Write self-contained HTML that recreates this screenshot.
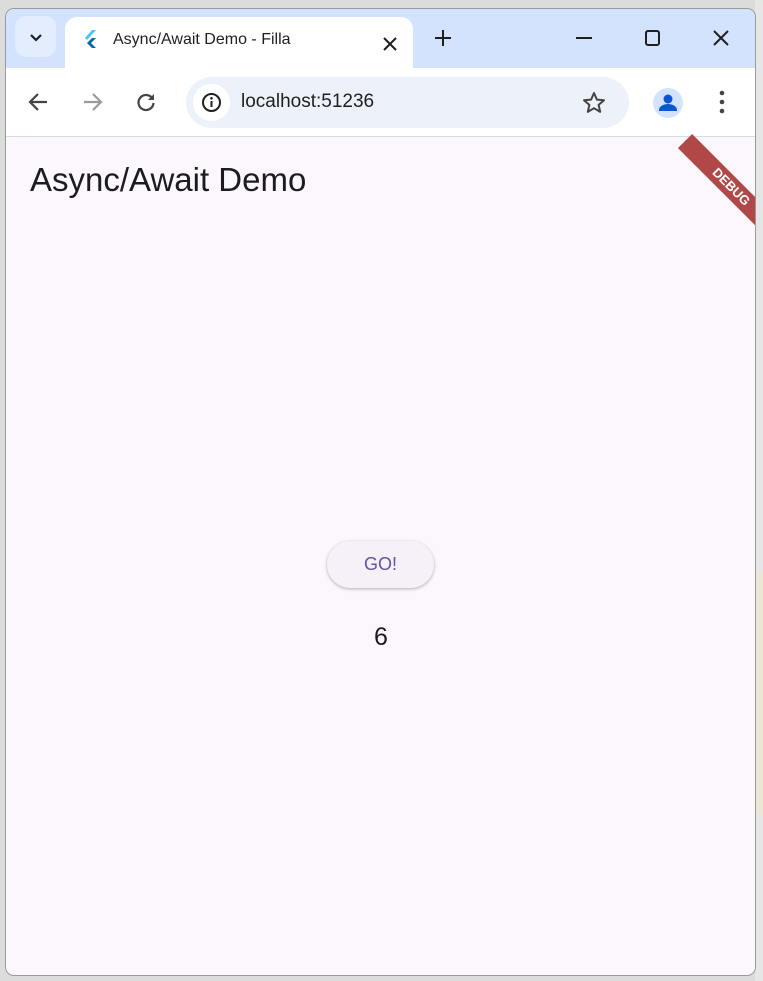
<!DOCTYPE html>
<html><head><meta charset="utf-8"><style>
*{margin:0;padding:0;box-sizing:border-box}
body{width:763px;height:981px;overflow:hidden;background:#dcdcdc;font-family:"Liberation Sans",sans-serif;position:relative}
.right{position:absolute;left:755px;top:0;width:8px;height:981px;background:#e6e6e6}
.beige{position:absolute;left:755px;top:572px;width:8px;height:243px;background:#ece6d6}
.win{position:absolute;left:5px;top:8px;width:751px;height:968px;border-radius:9px;overflow:hidden;background:#fcf7fd;border:1px solid #9a9a9a}
.tabs{position:absolute;left:0;top:0;width:100%;height:59px;background:#d3e3fd}
.tabbtn{position:absolute;left:9px;top:7px;width:41px;height:41px;border-radius:11px;background:#e4edfd}
.tab{position:absolute;left:59px;top:8px;width:348px;height:52px;background:#fff;border-radius:12px 12px 0 0}
.tab .t{position:absolute;left:48px;top:14px;font-size:16px;color:#1f1f1f}
.toolbar{position:absolute;left:0;top:59px;width:100%;height:69px;background:#fff;border-bottom:1px solid #dadce0}
.omni{position:absolute;left:180px;top:9px;width:443px;height:51px;border-radius:26px;background:#edf2fa}
.omni .ic{position:absolute;left:7px;top:7px;width:37px;height:37px;border-radius:50%;background:#fff}
.omni .u{position:absolute;left:55px;top:14px;font-size:19px;color:#1f1f1f}
.title{position:absolute;left:24px;top:152px;font-size:33px;color:#1d1b20}
.btn{position:absolute;left:321px;top:532px;width:107px;height:47px;border-radius:24px;background:#f6f0f8;box-shadow:0 1px 3px rgba(0,0,0,.3);color:#6750a4;font-size:18px;text-align:center;line-height:47px}
.num{position:absolute;left:0;width:750px;top:614px;text-align:center;font-size:25px;color:#1d1b20}
.ribbon{position:absolute;left:660px;top:168px;width:130px;height:20px;background:#b04848;transform:rotate(45deg);color:#fff;font-size:13px;font-weight:bold;text-align:center;line-height:20px}
svg{position:absolute}
</style></head><body>
<div class="right"></div><div class="beige"></div>
<div class="win">
 <div class="tabs">
  <div class="tabbtn"></div>
  <svg style="left:22px;top:20px" width="16" height="16" viewBox="0 0 16 16"><path d="M3 6l5 5 5-5" fill="none" stroke="#1f1f1f" stroke-width="2.2"/></svg>
  <div class="tab">
   <svg style="left:18px;top:12px" width="16" height="20" viewBox="0 0 16 20"><path d="M9 1L2 9l2 2 9-10z" fill="#47c5fb"/><path d="M9 9l-5 5 5 5h4l-5-5 5-5z" fill="#0569a8"/></svg>
   <div class="t">Async/Await Demo - Filla</div>
   <svg style="left:318px;top:20px" width="14" height="14" viewBox="0 0 14 14"><path d="M1 1l12 12M13 1L1 13" stroke="#1f1f1f" stroke-width="2"/></svg>
  </div>
  <svg style="left:428px;top:20px" width="18" height="18" viewBox="0 0 18 18"><path d="M9 1v16M1 9h16" stroke="#1f1f1f" stroke-width="2"/></svg>
  <svg style="left:570px;top:28px" width="16" height="3"><rect width="16" height="2" fill="#1f1f1f"/></svg>
  <svg style="left:639px;top:21px" width="15" height="16"><rect x="1" y="1" width="13" height="14" rx="2" fill="none" stroke="#1f1f1f" stroke-width="2"/></svg>
  <svg style="left:707px;top:21px" width="16" height="16"><path d="M1 1l14 14M15 1L1 15" stroke="#1f1f1f" stroke-width="2"/></svg>
 </div>
 <div class="toolbar">
  <svg style="left:22px;top:25px" width="20" height="18" viewBox="0 0 20 18"><path d="M19 9H3M10 1L2 9l8 8" fill="none" stroke="#444" stroke-width="2.2"/></svg>
  <svg style="left:77px;top:25px" width="20" height="18" viewBox="0 0 20 18"><path d="M1 9h16M10 1l8 8-8 8" fill="none" stroke="#9a9a9a" stroke-width="2.2"/></svg>
  <svg style="left:130px;top:24px" width="20" height="20" viewBox="0 0 20 20"><path d="M16 6A7.5 7.5 0 1 0 17.5 11" fill="none" stroke="#444" stroke-width="2.2"/><path d="M18 2v6h-6z" fill="#444"/></svg>
  <div class="omni"><div class="ic"></div>
   <svg style="left:15px;top:15px" width="21" height="21" viewBox="0 0 21 21"><circle cx="10.5" cy="10.5" r="8.5" fill="none" stroke="#1f1f1f" stroke-width="2"/><path d="M10.5 9v6" stroke="#1f1f1f" stroke-width="2"/><circle cx="10.5" cy="6.3" r="1.3" fill="#1f1f1f"/></svg>
   <div class="u">localhost:51236</div>
   <svg style="left:396px;top:14px" width="24" height="23" viewBox="0 0 24 23"><path d="M12 2l2.9 6.6 7.1.6-5.4 4.7 1.6 7-6.2-3.7-6.2 3.7 1.6-7L2 9.2l7.1-.6z" fill="none" stroke="#444" stroke-width="2" stroke-linejoin="round"/></svg>
  </div>
  <svg style="left:647px;top:20px" width="30" height="30" viewBox="0 0 30 30"><circle cx="15" cy="15" r="15" fill="#d3e3fd"/><circle cx="15" cy="11" r="4.5" fill="#0b57d0"/><path d="M6 22c0-4 5-6 9-6s9 2 9 6v1H6z" fill="#0b57d0"/></svg>
  <svg style="left:713px;top:22px" width="6" height="24"><circle cx="3" cy="3" r="2.3" fill="#444"/><circle cx="3" cy="12" r="2.3" fill="#444"/><circle cx="3" cy="21" r="2.3" fill="#444"/></svg>
 </div>
 <div class="title">Async/Await Demo</div>
 <div class="ribbon">DEBUG</div>
 <div class="btn">GO!</div>
 <div class="num">6</div>
</div>
</body></html>
